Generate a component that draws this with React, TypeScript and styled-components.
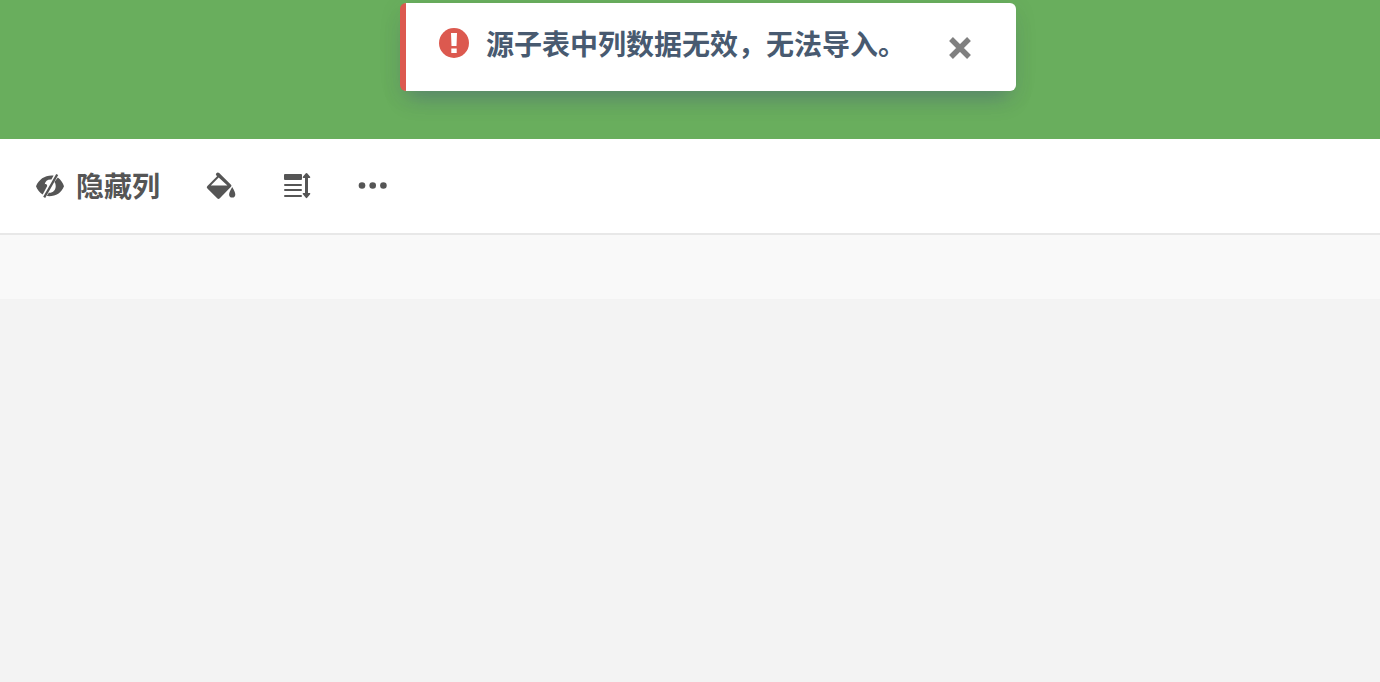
import React from "react";
import styled, { createGlobalStyle } from "styled-components";

const GlobalStyle = createGlobalStyle`
  *, *::before, *::after { box-sizing: border-box; }
  html { background: #f3f3f3; }
  body {
    margin: 0;
    font-family: "Liberation Sans", "Noto Sans CJK SC", sans-serif;
    font-size: 28px;
    line-height: 40px;
  }
`;

const Page = styled.div`
  min-height: 100vh;
  background: #f3f3f3;
`;

const Header = styled.header`
  position: relative;
  height: 139px;
  background: #69ae5d;
`;

const Toast = styled.div`
  position: absolute;
  top: 3px;
  left: calc(50% - 290px);
  display: flex;
  align-items: flex-start;
  width: 616px;
  max-width: 100%;
  min-height: 88px;
  padding: 20px 40px 20px 33px;
  border-left: 6px solid #dc594f;
  border-radius: 6px;
  background: #fff;
  box-shadow: 0 4px 24px rgba(72, 88, 108, 0.08), 0 14px 20px -8px rgba(72, 84, 130, 0.45);
`;

const ToastIcon = styled.svg`
  flex: none;
  width: 30px;
  height: 30px;
  margin: 5px 17px 0 0;
`;

const Message = styled.p`
  flex: 1;
  margin: 0;
  padding-top: 3px;
  color: #485a70;
  font-weight: 700;
  white-space: nowrap;
`;

const IconButton = styled.button`
  display: flex;
  align-items: center;
  gap: 11px;
  padding: 0;
  border: 0;
  background: none;
  color: #555;
  font: inherit;
  font-weight: 700;
  cursor: pointer;

  svg { flex: none; display: block; }
`;

const Label = styled.span`
  padding-top: 4px;
`;

const CloseButton = styled(IconButton)`
  padding: 8px 4px;
  margin-top: 5px;
  color: #808080;
`;

const Toolbar = styled.div`
  display: flex;
  align-items: center;
  gap: 46px;
  height: 96px;
  padding: 0 35px;
  border-bottom: 2px solid #e8e8e8;
  background: #fff;
`;

const Strip = styled.div`
  height: 64px;
  background: #f9f9f9;
`;

const EyeOff = () => (
  <svg width="30" height="30" viewBox="0 0 30 30" fill="currentColor" aria-hidden="true">
    <path d="M18.600 4.600 16.400 8.500C12.600 8.200 10.100 10.300 9.700 13.300c1.500-.8 2.300 0 2.500 1.800L7.700 23.500C4.800 21.700 2.200 18.600 1 15.200 4 8 10.500 3.800 18.600 4.600Z" />
    <path d="M22.800 6.500C25.700 8.500 28 12 29 15.200 26.200 22.200 20 26 11.800 25.100l2-3.400c4.200.3 6.900-2.700 6.900-6.500 0-1.700-.4-3-1.300-4.100Z" />
    <path d="m21.200 2.900 2 1.200L10.200 27l-2-1.200Z" />
  </svg>
);

const PaintBucket = () => (
  <svg width="30" height="30" viewBox="0 0 30 30" fill="currentColor" aria-hidden="true">
    <path
      fillRule="evenodd"
      d="M10.400 2.200a2 2 0 0 1 2.800-.2L25 13.700a1.400 1.400 0 0 1 0 2L13.800 27.300a1.800 1.800 0 0 1-2.600 0L1.400 17.500a1.800 1.800 0 0 1 0-2.600l9.700-9.700-.7-.8a1.500 1.500 0 0 1 0-2.200ZM12.700 6.500 4.800 14.600h16.600Z"
    />
    <path d="M26.200 16c1.900 3.200 3.100 5.500 3.100 7.500a3.100 3.100 0 0 1-6.200 0c0-2 1.300-4.300 3.100-7.500Z" />
  </svg>
);

const RowHeight = () => (
  <svg width="30" height="30" viewBox="0 0 30 30" fill="currentColor" aria-hidden="true">
    <rect x="2" y="3" width="18" height="6" rx="1" />
    <rect x="2" y="13" width="18" height="2" rx="1" />
    <rect x="2" y="18" width="18" height="2" rx="1" />
    <rect x="2" y="24" width="18" height="2" rx="1" />
    <path d="M24.500 2c.4 0 .7.200.9.500l2.700 3.300c.4.500.2 1.200-.5 1.200H26v15h1.600c.7 0 .9.700.5 1.200l-2.700 3.300a1.100 1.100 0 0 1-1.800 0l-2.700-3.300c-.4-.5-.2-1.200.5-1.200H23V7h-1.600c-.7 0-.9-.7-.5-1.200l2.700-3.300c.2-.3.500-.5.900-.5Z" />
  </svg>
);

const More = () => (
  <svg width="30" height="30" viewBox="0 0 30 30" fill="currentColor" aria-hidden="true">
    <circle cx="4" cy="14.500" r="3.300" />
    <circle cx="14.700" cy="14.500" r="3.300" />
    <circle cx="25.400" cy="14.500" r="3.300" />
  </svg>
);

export default function App() {
  return (
    <Page lang="zh-CN">
      <GlobalStyle />
      <Header>
        <Toast role="alert">
          <ToastIcon viewBox="0 0 30 30" aria-hidden="true">
            <circle cx="15" cy="15" r="15" fill="#dc594f" />
            <path d="M12 5h6l-.5 13h-5ZM12.300 20.500h5.400v4.500h-5.400Z" fill="#fff" />
          </ToastIcon>
          <Message>源子表中列数据无效，无法导入。</Message>
          <CloseButton type="button" aria-label="关闭">
            <svg width="24" height="24" viewBox="0 0 24 24" aria-hidden="true">
              <path d="m3 3 18 18M21 3 3 21" stroke="currentColor" strokeWidth="5.400" />
            </svg>
          </CloseButton>
        </Toast>
      </Header>
      <Toolbar role="toolbar">
        <IconButton type="button">
          <EyeOff />
          <Label>隐藏列</Label>
        </IconButton>
        <IconButton type="button" aria-label="填充颜色"><PaintBucket /></IconButton>
        <IconButton type="button" aria-label="行高"><RowHeight /></IconButton>
        <IconButton type="button" aria-label="更多"><More /></IconButton>
      </Toolbar>
      <Strip />
    </Page>
  );
}
